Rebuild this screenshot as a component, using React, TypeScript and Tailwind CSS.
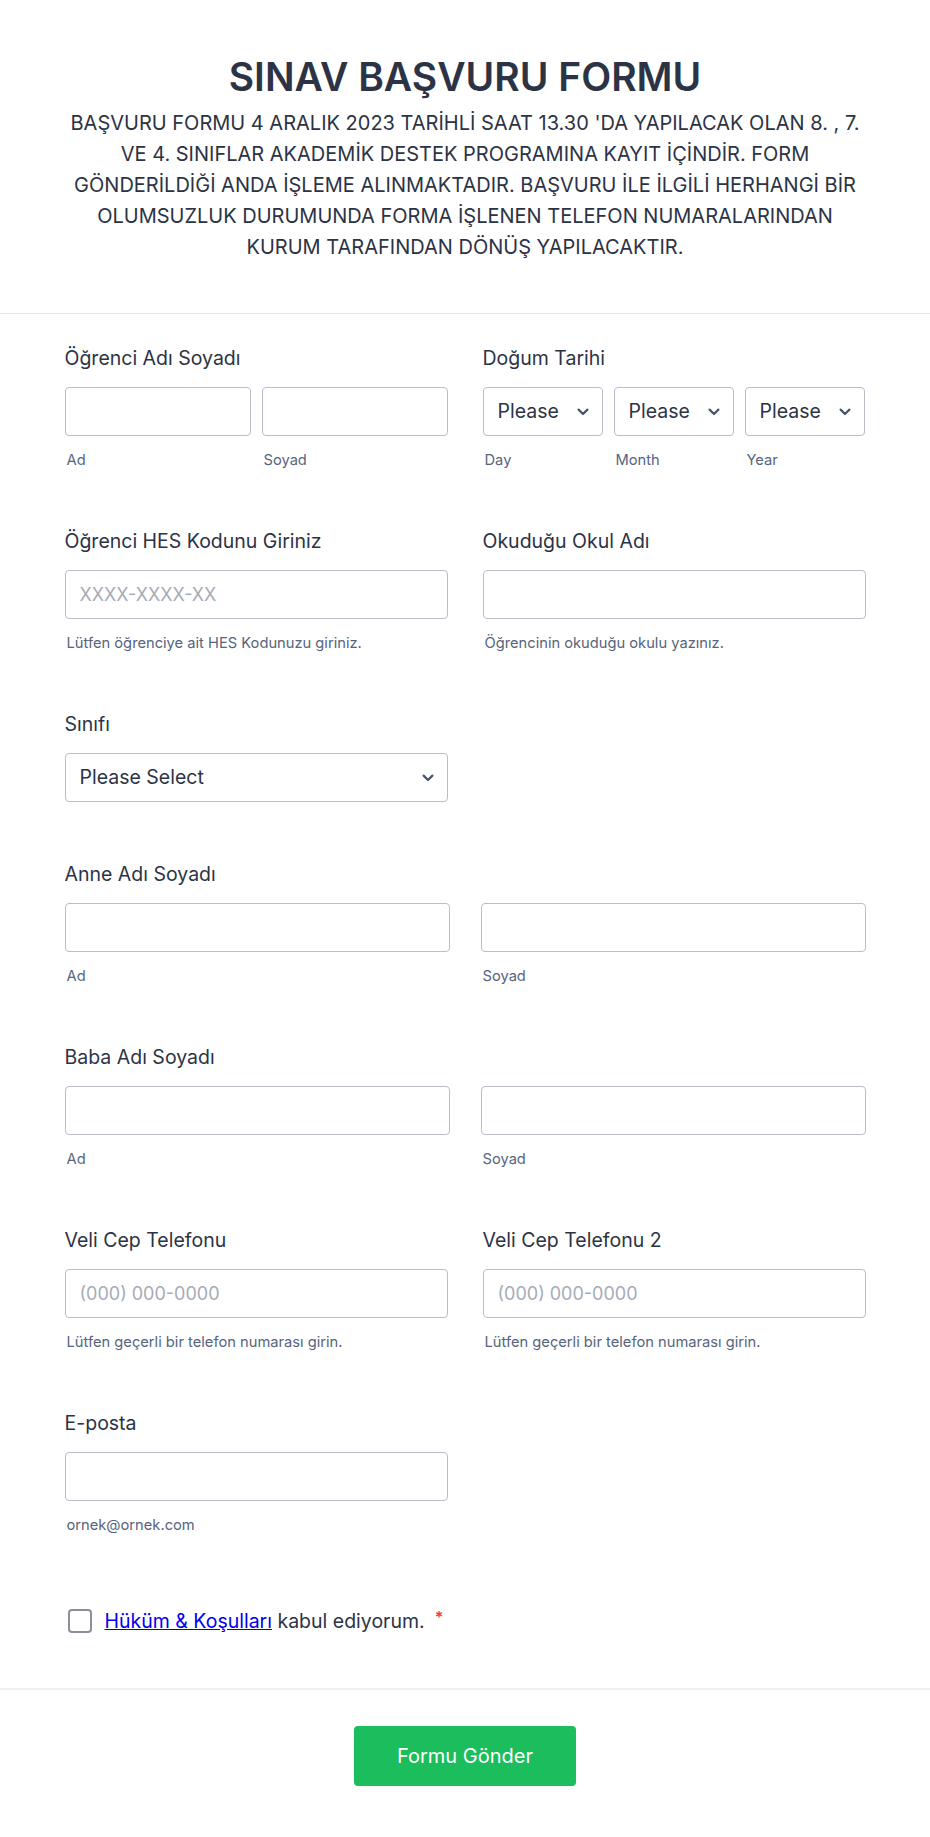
import React from "react";

const Chevron = () => (
  <svg width="12" height="8" viewBox="0 0 12 8" className="shrink-0">
    <path d="M1.6 1.6L6 6l4.4-4.4" fill="none" stroke="#4b5468" strokeWidth="2.2" strokeLinecap="round" strokeLinejoin="round" />
  </svg>
);

const Label = ({ children }: { children: React.ReactNode }) => (
  <div className="text-[19.5px] leading-6 font-normal text-[#2c3345]">{children}</div>
);

const Sub = ({ children }: { children: React.ReactNode }) => (
  <div className="mt-[15px] pl-[2px] text-[14.7px] leading-[18px] text-[#57647e]">{children}</div>
);

const Box = ({ placeholder }: { placeholder?: string }) => (
  <div className="flex h-[49px] items-center rounded-[4px] border border-[#b8bdc9] bg-white pl-[14px] text-[18px] text-[#a6abb8]">
    {placeholder}
  </div>
);

const SmallSelect = () => (
  <div className="relative flex h-[49px] items-center rounded-[4px] border border-[#b8bdc9] bg-white pl-[14px] pr-[13px]">
    <div className="relative flex-1 overflow-hidden whitespace-nowrap text-[19.5px] text-[#2c3345]">
      Please Select
      <div className="absolute right-0 top-0 h-full w-[8px] bg-gradient-to-r from-white/0 to-white" />
    </div>
    <div className="ml-[12px]">
      <Chevron />
    </div>
  </div>
);

const Field = ({ label, children }: { label: string; children: React.ReactNode }) => (
  <div>
    <Label>{label}</Label>
    <div className="mt-[17px]">{children}</div>
  </div>
);

export default function App() {
  return (
    <div className="min-h-[1837px] bg-white font-[Inter,sans-serif] text-[#2c3345]">
      <header className="border-b border-[#e3e5ec] pb-[50px] pt-[54px] text-center">
        <h1 className="text-[39px] font-semibold leading-[46px] text-[#2c3345]">SINAV BAŞVURU FORMU</h1>
        <p className="mx-auto mt-[8px] w-[801px] text-[20px] leading-[31px] text-[#2c3345]">
          BAŞVURU FORMU 4 ARALIK 2023 TARİHLİ SAAT 13.30 'DA YAPILACAK OLAN 8. , 7. VE 4. SINIFLAR AKADEMİK DESTEK PROGRAMINA KAYIT İÇİNDİR. FORM GÖNDERİLDİĞİ ANDA İŞLEME ALINMAKTADIR. BAŞVURU İLE İLGİLİ HERHANGİ BİR OLUMSUZLUK DURUMUNDA FORMA İŞLENEN TELEFON NUMARALARINDAN KURUM TARAFINDAN DÖNÜŞ YAPILACAKTIR.
        </p>
      </header>

      <main className="mx-auto flex w-[801px] flex-col gap-[60px] pt-[32px]">
        <div className="grid grid-cols-2 gap-[35px]">
          <Field label="Öğrenci Adı Soyadı">
            <div className="grid grid-cols-2 gap-[11px]">
              <div>
                <Box />
                <Sub>Ad</Sub>
              </div>
              <div>
                <Box />
                <Sub>Soyad</Sub>
              </div>
            </div>
          </Field>
          <Field label="Doğum Tarihi">
            <div className="flex gap-[11px]">
              <div className="w-[120px]">
                <SmallSelect />
                <Sub>Day</Sub>
              </div>
              <div className="w-[120px]">
                <SmallSelect />
                <Sub>Month</Sub>
              </div>
              <div className="w-[120px]">
                <SmallSelect />
                <Sub>Year</Sub>
              </div>
            </div>
          </Field>
        </div>

        <div className="grid grid-cols-2 gap-[35px]">
          <Field label="Öğrenci HES Kodunu Giriniz">
            <Box placeholder="XXXX-XXXX-XX" />
            <Sub>Lütfen öğrenciye ait HES Kodunuzu giriniz.</Sub>
          </Field>
          <Field label="Okuduğu Okul Adı">
            <Box />
            <Sub>Öğrencinin okuduğu okulu yazınız.</Sub>
          </Field>
        </div>

        <div className="grid grid-cols-2 gap-[35px]">
          <Field label="Sınıfı">
            <div className="flex h-[49px] items-center justify-between rounded-[4px] border border-[#b8bdc9] bg-white pl-[14px] pr-[13px] text-[19.5px] text-[#2c3345]">
              <span>Please Select</span>
              <Chevron />
            </div>
          </Field>
          <div />
        </div>

        <Field label="Anne Adı Soyadı">
          <div className="grid grid-cols-2 gap-[31px]">
            <div>
              <Box />
              <Sub>Ad</Sub>
            </div>
            <div>
              <Box />
              <Sub>Soyad</Sub>
            </div>
          </div>
        </Field>

        <Field label="Baba Adı Soyadı">
          <div className="grid grid-cols-2 gap-[31px]">
            <div>
              <Box />
              <Sub>Ad</Sub>
            </div>
            <div>
              <Box />
              <Sub>Soyad</Sub>
            </div>
          </div>
        </Field>

        <div className="grid grid-cols-2 gap-[35px]">
          <Field label="Veli Cep Telefonu">
            <Box placeholder="(000) 000-0000" />
            <Sub>Lütfen geçerli bir telefon numarası girin.</Sub>
          </Field>
          <Field label="Veli Cep Telefonu 2">
            <Box placeholder="(000) 000-0000" />
            <Sub>Lütfen geçerli bir telefon numarası girin.</Sub>
          </Field>
        </div>

        <div className="grid grid-cols-2 gap-[35px]">
          <Field label="E-posta">
            <Box />
            <Sub>ornek@ornek.com</Sub>
          </Field>
          <div />
        </div>

        <div className="mt-[15px] flex h-6 items-center pl-[3px]">
          <div className="h-[24px] w-[24px] shrink-0 rounded-[4px] border-2 border-[#8a8f9d] bg-white" />
          <div className="ml-[13px] text-[19.5px] leading-6">
            <a className="text-[#0000ee] underline">Hüküm &amp; Koşulları</a>
            <span className="text-[#2c3345]"> kabul ediyorum.</span>
            <span className="relative -top-[5px] ml-[10px] text-[16px] font-semibold text-[#f23a3c]">*</span>
          </div>
        </div>
      </main>

      <div className="mt-[55px] border-t-2 border-[#eeeff3] pb-[50px] pt-[36px]">
        <div className="flex justify-center">
          <button className="h-[60px] w-[222px] rounded-[4px] bg-[#1bbd5c] text-[20px] text-white">
            Formu Gönder
          </button>
        </div>
      </div>
    </div>
  );
}
